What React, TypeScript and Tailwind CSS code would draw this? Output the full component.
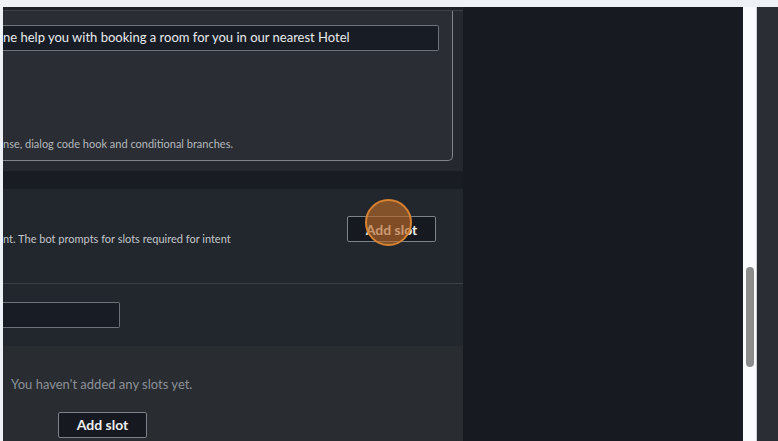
import React from "react";

const font = { fontFamily: 'Lato, "Noto Sans", sans-serif' };

function AddSlot({ highlight }: { highlight?: boolean }) {
  return (
    <div className="relative">
      <div className="w-[89px] h-[26px] border border-[#7d838b] rounded-[2px] bg-[#16191f] flex items-center justify-center text-[14px] font-bold text-[#eceef0]">
        Add slot
      </div>
      {highlight && (
        <div className="absolute left-[18px] top-[-17px] w-[47px] h-[47px] rounded-full border-2 border-[#d8832f] bg-[#b8692a]/65" />
      )}
    </div>
  );
}

export default function App() {
  return (
    <div
      className="w-[778px] h-[441px] overflow-hidden bg-[#eef2f7] pt-[7px] flex"
      style={font}
    >
      <div className="w-[3px] shrink-0" />
      {/* main column */}
      <div className="w-[460px] shrink-0 flex flex-col">
        {/* top panel */}
        <div className="h-[164px] bg-[#25282e] flex flex-col">
          <div className="h-[3px] bg-[#1e2127]" />
          <div className="h-[1px] bg-[#3d4148]" />
          <div className="flex-1 pr-[10px] pb-[10px]">
            <div className="h-full bg-[#2a2d33] border-r border-b border-[#80858c] rounded-br-[5px] flex flex-col pr-[13px] pt-[14px]">
              <div className="h-[26px] bg-[#181c24] border border-l-0 border-[#6c727a] rounded-r-[2px] flex items-center text-[13px] text-[#e9ebed] whitespace-nowrap overflow-hidden">
                ne help you with booking a room for you in our nearest Hotel
              </div>
              <div className="mt-[85px] text-[11px] text-[#b4b8bd] whitespace-nowrap">
                nse, dialog code hook and conditional branches.
              </div>
            </div>
          </div>
        </div>
        {/* gap */}
        <div className="h-[18px] bg-[#191c22]" />
        {/* slots header */}
        <div className="h-[95px] bg-[#22262d] border-b border-[#3a3f47] flex items-start justify-between pr-[27px]">
          <div className="mt-[42px] text-[11px] text-[#c3c6ca] whitespace-nowrap">
            nt. The bot prompts for slots required for intent
          </div>
          <div className="mt-[27px]">
            <AddSlot highlight />
          </div>
        </div>
        {/* search row */}
        <div className="h-[62px] bg-[#22262d] pt-[18px]">
          <div className="w-[117px] h-[26px] bg-[#181c24] border border-l-0 border-[#6c727a] rounded-r-[2px]" />
        </div>
        {/* empty state */}
        <div className="flex-1 bg-[#292c31] flex flex-col pl-[8px] pt-[29px]">
          <div className="text-[13px] text-[#8d9197] whitespace-nowrap">
            You haven&apos;t added any slots yet.
          </div>
          <div className="mt-[17px] ml-[47px]">
            <AddSlot />
          </div>
        </div>
      </div>
      {/* right dark area */}
      <div className="w-[280px] shrink-0 bg-[#171a21]" />
      {/* scrollbar */}
      <div className="w-[14px] shrink-0 bg-[#fafbfc] border-r border-[#c9ccd0] pt-[260px] pl-[3px]">
        <div className="w-[8px] h-[100px] rounded-full bg-[#8c8c8c]" />
      </div>
      <div className="flex-1 bg-[#2a2d33]" />
    </div>
  );
}
